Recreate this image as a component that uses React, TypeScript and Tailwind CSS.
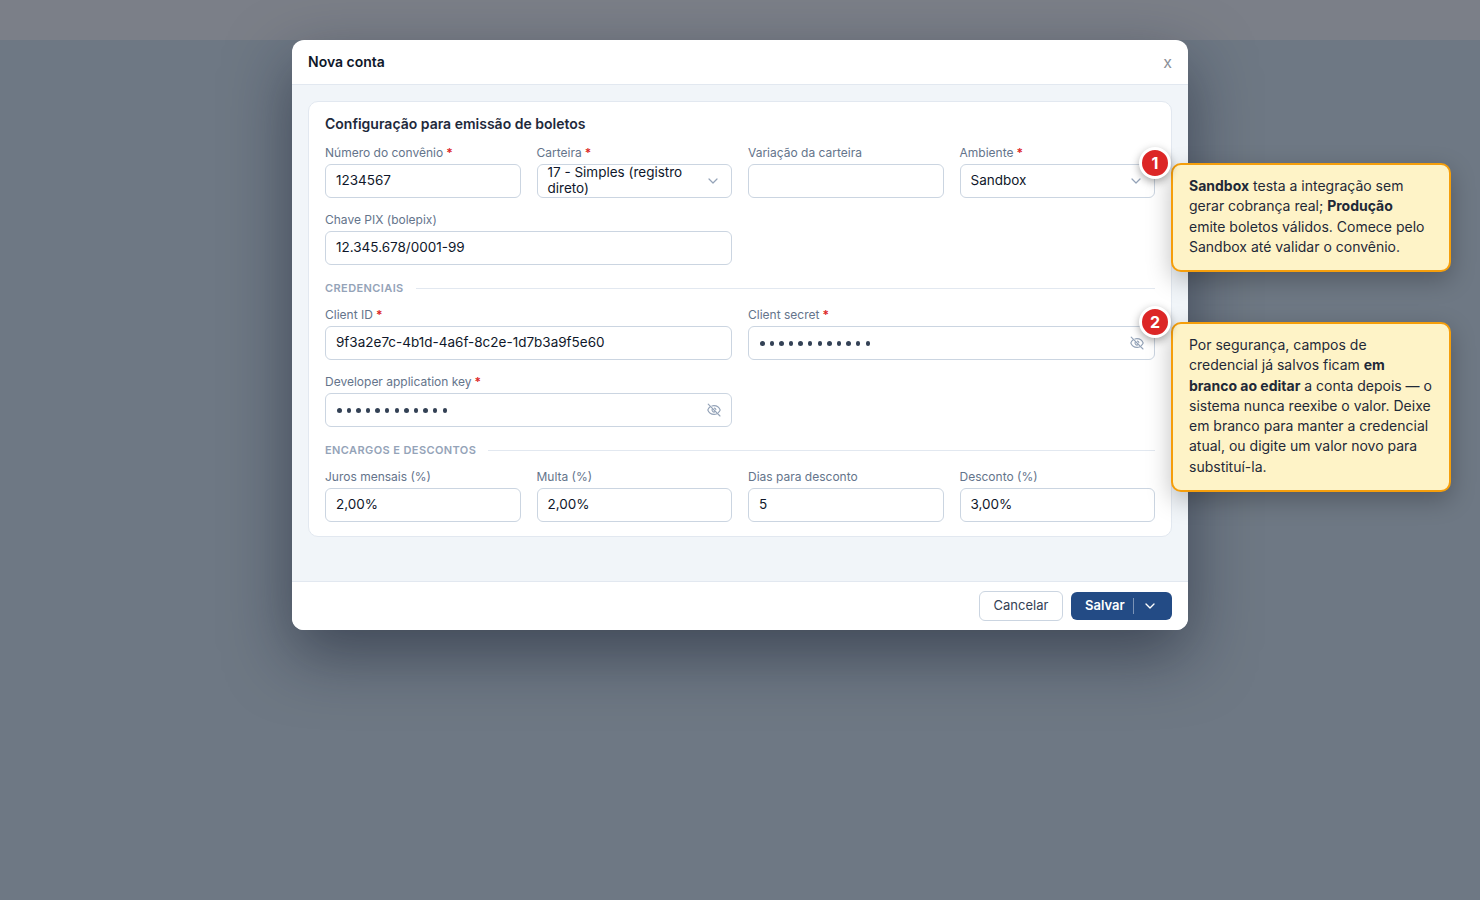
import React from 'react';
import { ChevronDown } from 'lucide-react';

type FieldProps = {
    label: string;
    value?: string;
    required?: boolean;
    wide?: boolean;
    type?: 'text' | 'select' | 'secret';
};

const EyeOffIcon: React.FC = () => (
    <svg
        className="h-3.5 w-3.5 shrink-0 text-[#94a3b8]"
        viewBox="0 0 14 14"
        fill="none"
        stroke="currentColor"
        strokeWidth="1.1"
        strokeLinecap="round"
        strokeLinejoin="round"
        aria-hidden="true"
    >
        <path d="M4.9 2.9A6.6 6.6 0 0 1 7 2.6c3.1 0 5.3 2 6.2 4.4a7 7 0 0 1-1.9 2.6" />
        <path d="M3.2 3.8A7 7 0 0 0 .8 7c.9 2.4 3.1 4.4 6.2 4.4a6.6 6.6 0 0 0 3-.7" />
        <path d="M5.6 5.7a1.9 1.9 0 0 0 2.7 2.7M7.5 5.1a1.9 1.9 0 0 1 1.4 1.4" />
        <path d="M1.2 1.2l11.8 11.8" />
    </svg>
);

const Field: React.FC<FieldProps> = ({ label, value = '', required, wide, type = 'text' }) => (
    <div className={wide ? 'col-span-2' : ''}>
        <div className="mb-[3px] text-xs leading-4 text-[#64748b]">
            {label}
            {required && <span className="font-semibold text-[#dc2626]"> *</span>}
        </div>
        <div className="flex h-[34px] items-center justify-between rounded-md border border-[#cbd5e1] bg-white px-2.5 text-[13.5px] leading-4 text-[#0f172a]">
            {type === 'secret' ? (
                <span className="flex items-center gap-[5.1px] pl-px pt-px">
                    {Array.from({ length: 12 }).map((_, i) => (
                        <span key={i} className="h-[4.5px] w-[4.5px] rounded-full bg-[#334155]" />
                    ))}
                </span>
            ) : (
                <span className="pb-0.5">{value}</span>
            )}
            {type === 'select' && (
                <ChevronDown className="ml-5 h-4 w-4 shrink-0 text-[#94a3b8]" strokeWidth={1.8} />
            )}
            {type === 'secret' && <EyeOffIcon />}
        </div>
    </div>
);

const SectionTitle: React.FC<{ children: React.ReactNode }> = ({ children }) => (
    <div className="mb-[11px] mt-[15px] flex items-center gap-3">
        <h3 className="text-[11px] font-semibold uppercase leading-4 tracking-[0.4px] text-[#94a3b8]">{children}</h3>
        <div className="h-px flex-1 bg-[#e2e8f0]" />
    </div>
);

const Badge: React.FC<{ n: number; className: string }> = ({ n, className }) => (
    <div
        className={`absolute left-[1139px] flex h-8 w-8 items-center justify-center rounded-full border-[3px] border-white bg-[#dc2626] text-base font-bold leading-none text-white shadow-[0_3px_8px_rgba(0,0,0,0.35)] ${className}`}
    >
        {n}
    </div>
);

const Note: React.FC<{ className: string; children: React.ReactNode }> = ({ className, children }) => (
    <div
        className={`absolute left-[1171px] w-[280px] rounded-[10px] border-2 border-[#f59e0b] bg-[#fef3c7] px-4 pb-[13px] pt-[11px] text-sm leading-[1.45] text-[#1f2937] shadow-[0_8px_24px_rgba(0,0,0,0.25)] ${className}`}
    >
        {children}
    </div>
);

const App: React.FC = () => {
    return (
        <div className="relative h-[900px] w-[1480px] overflow-hidden bg-[#6e7884] font-['Inter',sans-serif]">
            <div className="h-10 bg-[#7b7f88]" />

            <div className="relative mx-auto flex h-[590px] w-4xl flex-col rounded-xl bg-white shadow-[0_24px_64px_rgba(15,23,42,0.5)]">
                <header className="flex h-[45px] items-center justify-between border-b border-[#e2e8f0] px-4">
                    <h1 className="text-sm font-semibold text-[#0f172a]">Nova conta</h1>
                    <button className="text-base leading-5 text-[#8b8f98]">x</button>
                </header>

                <main className="flex-1 bg-[#f1f5f9] p-4">
                    <section className="rounded-[10px] border border-[#e2e8f0] bg-white px-4 pb-3.5 pt-3">
                        <h2 className="mb-[11px] text-sm font-semibold leading-5 text-[#1e293b]">
                            Configuração para emissão de boletos
                        </h2>
                        <div className="grid grid-cols-4 gap-x-4 gap-y-3.5">
                            <Field label="Número do convênio" value="1234567" required />
                            <Field label="Carteira" value="17 - Simples (registro direto)" required type="select" />
                            <Field label="Variação da carteira" />
                            <Field label="Ambiente" value="Sandbox" required type="select" />
                            <Field label="Chave PIX (bolepix)" value="12.345.678/0001-99" wide />
                        </div>

                        <SectionTitle>Credenciais</SectionTitle>
                        <div className="grid grid-cols-4 gap-x-4 gap-y-3.5">
                            <Field label="Client ID" value="9f3a2e7c-4b1d-4a6f-8c2e-1d7b3a9f5e60" required wide />
                            <Field label="Client secret" required wide type="secret" />
                            <Field label="Developer application key" required wide type="secret" />
                        </div>

                        <SectionTitle>Encargos e descontos</SectionTitle>
                        <div className="grid grid-cols-4 gap-x-4">
                            <Field label="Juros mensais (%)" value="2,00%" />
                            <Field label="Multa (%)" value="2,00%" />
                            <Field label="Dias para desconto" value="5" />
                            <Field label="Desconto (%)" value="3,00%" />
                        </div>
                    </section>
                </main>

                <footer className="flex h-[49px] items-center justify-end gap-2 rounded-b-xl border-t border-[#e2e8f0] bg-white px-4">
                    <button className="h-[30px] w-[84px] rounded-md border border-[#cbd5e1] bg-white text-[13px] text-[#334155]">
                        Cancelar
                    </button>
                    <button className="flex h-7 w-[101px] items-center rounded-md bg-[#234b85] pl-3.5 text-[13px] font-semibold text-white">
                        Salvar
                        <span className="ml-2 h-4 w-px bg-white/40" />
                        <ChevronDown className="ml-2 h-4 w-4" strokeWidth={2} />
                    </button>
                </footer>
            </div>

            <Note className="top-[163px]">
                <strong className="font-bold">Sandbox</strong> testa a integração sem gerar cobrança real;{' '}
                <strong className="font-bold">Produção</strong> emite boletos válidos. Comece pelo Sandbox até validar o
                convênio.
            </Note>
            <Note className="top-[322px]">
                Por segurança, campos de credencial já salvos ficam <strong className="font-bold">em branco ao editar</strong>{' '}
                a conta depois — o sistema nunca reexibe o valor. Deixe em branco para manter a credencial atual, ou digite
                um valor novo para substituí-la.
            </Note>
            <Badge n={1} className="top-[147px]" />
            <Badge n={2} className="top-[306px]" />
        </div>
    );
};

export default App;
